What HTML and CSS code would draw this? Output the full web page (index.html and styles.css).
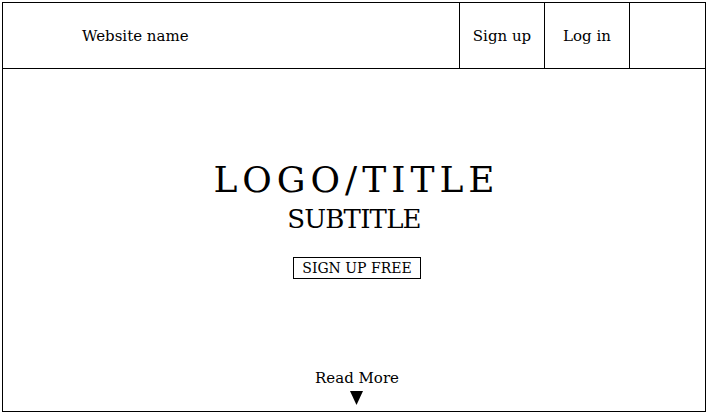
FILE: index.html
```html
<!DOCTYPE html>
<html lang="en">
<head>
<meta charset="utf-8">
<title>Website name</title>
<link rel="stylesheet" href="styles.css">
</head>
<body>
<div class="frame">
  <header class="header">
    <div class="brand">Website name</div>
    <a class="nav-cell" href="#">Sign up</a>
    <a class="nav-cell" href="#">Log in</a>
    <div class="nav-cell nav-empty"></div>
  </header>
  <main class="main">
    <section class="hero">
      <h1 class="title">LOGO/TITLE</h1>
      <h2 class="subtitle">SUBTITLE</h2>
      <a class="cta" href="#">SIGN UP FREE</a>
    </section>
    <div class="more">
      <span class="more-label">Read More</span>
      <svg class="more-arrow" width="13" height="14" viewBox="0 0 13 14"><polygon points="0,0 13,0 6.5,14" fill="#000"/></svg>
    </div>
  </main>
</div>
</body>
</html>
```

FILE: styles.css
```css
html, body {
  margin: 0;
  padding: 0;
  background: #fff;
}
body {
  font-family: "DejaVu Serif", serif;
  color: #000;
}
.frame {
  margin: 2px 0 0 2px;
  width: 704px;
  height: 410px;
  box-sizing: border-box;
  border: 1px solid #000;
  display: flex;
  flex-direction: column;
}
.header {
  display: flex;
  height: 66px;
  box-sizing: border-box;
  border-bottom: 1px solid #000;
  flex: none;
}
.brand {
  flex: 1;
  padding: 1px 0 0 79px;
  font-size: 15px;
  line-height: 64px;
}
.nav-cell {
  width: 85px;
  box-sizing: border-box;
  border-left: 1px solid #000;
  padding-top: 1px;
  text-align: center;
  font-size: 15px;
  line-height: 64px;
  color: #000;
  text-decoration: none;
}
.nav-empty {
  width: 76px;
}
.main {
  flex: 1;
  display: flex;
  flex-direction: column;
  align-items: center;
}
.hero {
  margin-top: 91px;
  display: flex;
  flex-direction: column;
  align-items: center;
}
.title {
  margin: 0;
  font-size: 36px;
  line-height: 40px;
  font-weight: normal;
  letter-spacing: 5px;
  padding-left: 5px;
}
.subtitle {
  margin: 4px 0 0;
  font-size: 26px;
  line-height: 30px;
  font-weight: normal;
  letter-spacing: -0.8px;
}
.cta {
  margin: 23px 0 0 6px;
  display: inline-block;
  border: 1px solid #000;
  padding: 0 8px;
  font-size: 14px;
  line-height: 20px;
  color: #000;
  text-decoration: none;
}
.more {
  margin-top: auto;
  padding-bottom: 6px;
  margin-left: 6px;
  display: flex;
  flex-direction: column;
  align-items: center;
}
.more-label {
  font-size: 15px;
  line-height: 18px;
}
.more-arrow {
  display: block;
  margin-top: 4px;
}
```
